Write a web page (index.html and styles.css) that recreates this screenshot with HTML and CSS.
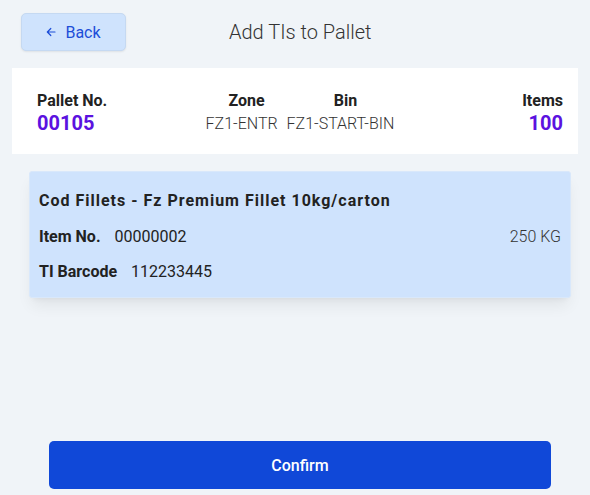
FILE: index.html
```html
<!DOCTYPE html>
<html>
<head>
<meta charset="utf-8">
<link rel="stylesheet" href="styles.css">
</head>
<body>
<div class="page">
  <div class="topbar">
    <button class="back-btn">
      <svg class="back-icon" width="10" height="10" viewBox="0 0 10 10"><path d="M9 5H1.5M4.8 1.5L1.3 5l3.5 3.5" fill="none" stroke="currentColor" stroke-width="1.2" stroke-linecap="round" stroke-linejoin="round"/></svg>
      <span>Back</span>
    </button>
    <div class="title">Add TIs to Pallet</div>
  </div>

  <div class="pallet-card">
    <div class="col col-left">
      <div class="label">Pallet No.</div>
      <div class="big">00105</div>
    </div>
    <div class="mid">
      <div class="col col-center">
        <div class="label lbl-shift">Zone</div>
        <div class="val">FZ1-ENTR</div>
      </div>
      <div class="col col-center">
        <div class="label lbl-shift">Bin</div>
        <div class="val">FZ1-START-BIN</div>
      </div>
    </div>
    <div class="col col-right">
      <div class="label">Items</div>
      <div class="big">100</div>
    </div>
  </div>

  <div class="item-card">
    <div class="item-title">Cod Fillets - Fz Premium Fillet 10kg/carton</div>
    <div class="item-row">
      <div><span class="ilabel">Item No.</span><span class="ival">00000002</span></div>
      <div class="weight">250 KG</div>
    </div>
    <div class="item-row">
      <div><span class="ilabel">TI Barcode</span><span class="ival">112233445</span></div>
    </div>
  </div>

  <button class="confirm">Confirm</button>
</div>
</body>
</html>
```
FILE: styles.css
```css
* { box-sizing: border-box; }
html, body { margin: 0; padding: 0; }
body {
  background: #f0f4f8;
  font-family: Roboto, "Liberation Sans", sans-serif;
  color: #222;
}
.page {
  height: 495px;
  display: flex;
  flex-direction: column;
}
.topbar {
  display: flex;
  align-items: center;
  padding: 13px 0 0 21px;
}
.back-btn {
  width: 105px;
  height: 38px;
  background: #cfe3fd;
  border: 1px solid #c5d9f2;
  border-radius: 5px;
  box-shadow: 0 1px 2px rgba(0,0,0,0.08);
  color: #1d4ed8;
  font-family: Roboto, "Liberation Sans", sans-serif;
  font-size: 16px;
  display: flex;
  align-items: center;
  justify-content: center;
  gap: 9px;
  padding: 0;
}
.back-icon { display: block; }
.title {
  margin-left: 103px;
  font-size: 20px;
  font-weight: 300;
  color: #333;
}
.pallet-card {
  margin: 17px 12px 0 12px;
  background: #fff;
  padding: 24px 15px 18px 25px;
  display: grid;
  grid-template-columns: 1fr auto 1fr;
  align-items: start;
}
.col { display: flex; flex-direction: column; }
.col-left { align-items: flex-start; }
.col-right { align-items: flex-end; }
.col-center { align-items: center; }
.mid { display: flex; gap: 9px; }
.label {
  font-size: 16px;
  font-weight: 700;
  line-height: 18px;
  color: #222;
}
.lbl-shift { padding-left: 10px; }
.big {
  font-size: 20px;
  font-weight: 700;
  line-height: 26px;
  color: #5b12e0;
}
.val {
  font-size: 16px;
  font-weight: 300;
  line-height: 24px;
  padding-top: 2px;
  color: #333;
}
.item-card {
  margin: 17px 19px 0 29px;
  background: #cfe3fd;
  border: 1px solid #d9e8fb;
  border-radius: 3px;
  padding: 19px 9px 15px 9px;
  box-shadow: 0 10px 15px -3px rgba(0,0,0,0.07), 0 4px 6px -4px rgba(0,0,0,0.07);
}
.item-title {
  font-size: 16px;
  font-weight: 700;
  letter-spacing: 1px;
  line-height: 20px;
}
.item-row {
  display: flex;
  justify-content: space-between;
  align-items: center;
  margin-top: 16px;
  line-height: 20px;
  font-size: 16px;
}
.item-row + .item-row { margin-top: 15px; }
.ilabel { font-weight: 700; margin-right: 14px; }
.ival { font-weight: 400; color: #222; }
.weight { font-weight: 300; color: #333; }
.confirm {
  margin: auto 0 6px 49px;
  width: 502px;
  height: 48px;
  background: #1048d8;
  color: #fff;
  border: none;
  border-radius: 5px;
  font-family: Roboto, "Liberation Sans", sans-serif;
  font-size: 16px;
  font-weight: 500;
}
```
